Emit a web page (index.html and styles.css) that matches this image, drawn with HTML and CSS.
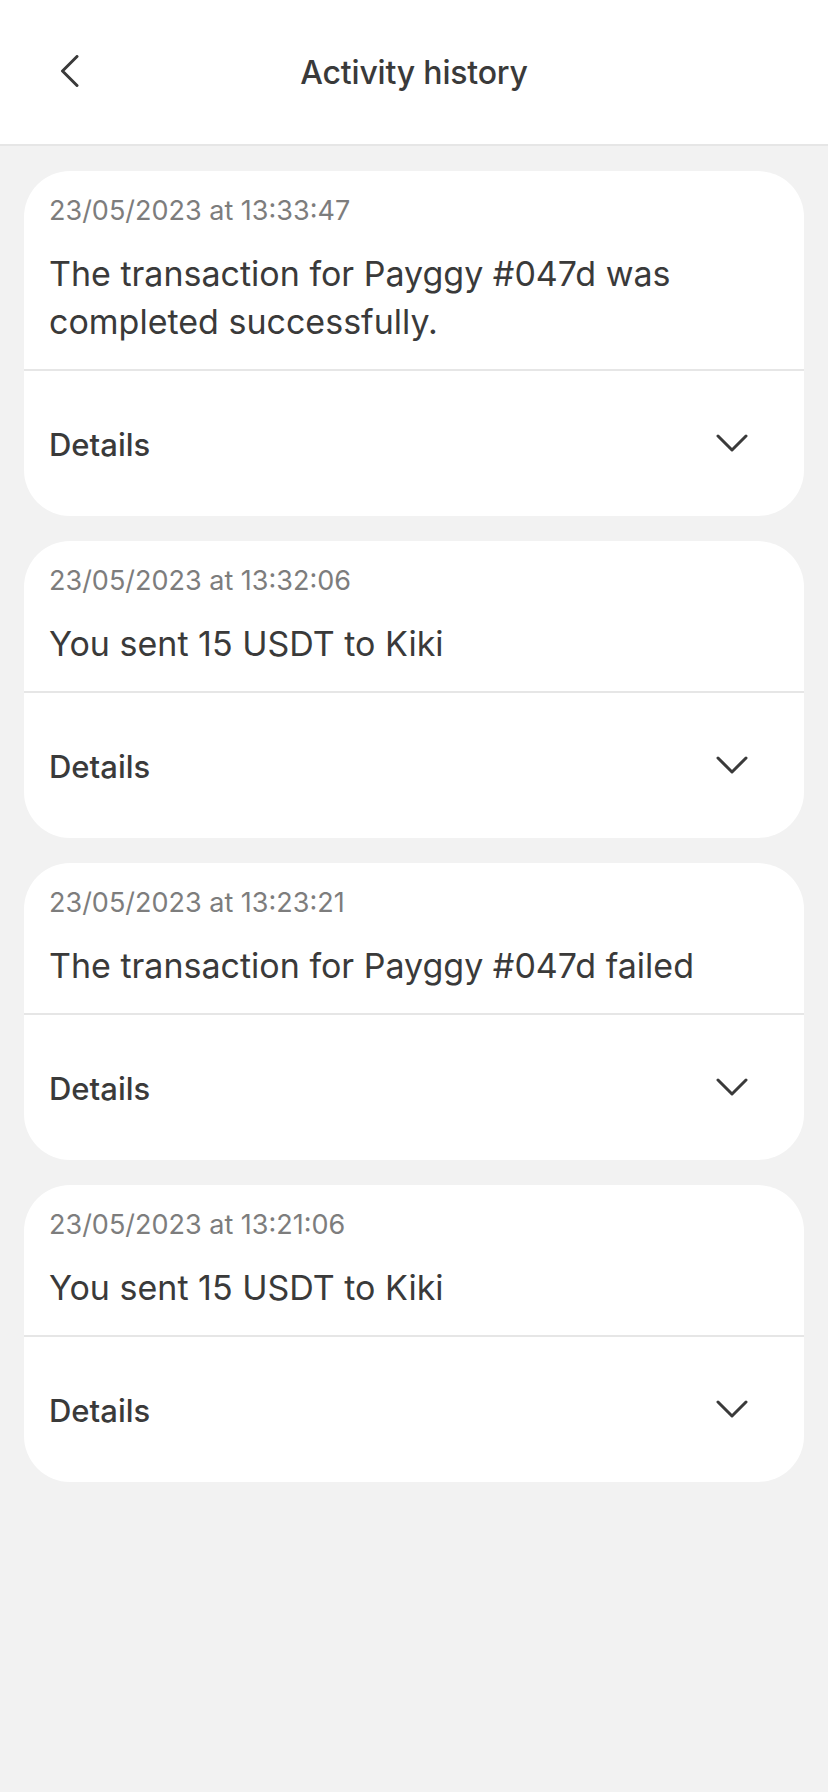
FILE: index.html
```html
<!DOCTYPE html>
<html lang="en">
<head>
<meta charset="utf-8">
<title>Activity history</title>
<link rel="stylesheet" href="styles.css">
</head>
<body>
<header class="topbar">
  <button class="back" aria-label="Back">
    <svg width="20" height="32" viewBox="0 0 20 32"><path d="M17 1.5 L2.5 16 L17 30.5" fill="none" stroke="#3a3a3a" stroke-width="3" stroke-linecap="round" stroke-linejoin="round"/></svg>
  </button>
  <h1 class="title">Activity history</h1>
</header>
<main class="list">
  <section class="card">
    <div class="card-main">
      <div class="date">23/05/2023 at 13:33:47</div>
      <p class="message">The transaction for Payggy #047d was completed successfully.</p>
    </div>
    <div class="card-foot">
      <span class="details">Details</span>
      <svg class="chev" width="32" height="18" viewBox="0 0 32 18"><path d="M2 2 L16 16 L30 2" fill="none" stroke="#3a3a3a" stroke-width="3" stroke-linecap="round" stroke-linejoin="round"/></svg>
    </div>
  </section>
  <section class="card">
    <div class="card-main">
      <div class="date">23/05/2023 at 13:32:06</div>
      <p class="message">You sent 15 USDT to Kiki</p>
    </div>
    <div class="card-foot">
      <span class="details">Details</span>
      <svg class="chev" width="32" height="18" viewBox="0 0 32 18"><path d="M2 2 L16 16 L30 2" fill="none" stroke="#3a3a3a" stroke-width="3" stroke-linecap="round" stroke-linejoin="round"/></svg>
    </div>
  </section>
  <section class="card">
    <div class="card-main">
      <div class="date">23/05/2023 at 13:23:21</div>
      <p class="message">The transaction for Payggy #047d failed</p>
    </div>
    <div class="card-foot">
      <span class="details">Details</span>
      <svg class="chev" width="32" height="18" viewBox="0 0 32 18"><path d="M2 2 L16 16 L30 2" fill="none" stroke="#3a3a3a" stroke-width="3" stroke-linecap="round" stroke-linejoin="round"/></svg>
    </div>
  </section>
  <section class="card">
    <div class="card-main">
      <div class="date">23/05/2023 at 13:21:06</div>
      <p class="message">You sent 15 USDT to Kiki</p>
    </div>
    <div class="card-foot">
      <span class="details">Details</span>
      <svg class="chev" width="32" height="18" viewBox="0 0 32 18"><path d="M2 2 L16 16 L30 2" fill="none" stroke="#3a3a3a" stroke-width="3" stroke-linecap="round" stroke-linejoin="round"/></svg>
    </div>
  </section>
</main>
</body>
</html>
```
FILE: styles.css
```css
* { box-sizing: border-box; }
html, body {
  margin: 0;
  padding: 0;
  background: #f2f2f2;
  font-family: Inter, "Noto Sans", "Liberation Sans", sans-serif;
  color: #3a3a3a;
  min-height: 1792px;
}
.topbar {
  height: 146px;
  background: #ffffff;
  border-bottom: 2px solid #e6e6e6;
  display: grid;
  grid-template-columns: 1fr auto 1fr;
  align-items: center;
  padding: 0 0 0 60px;
}
.back {
  justify-self: start;
  background: none;
  border: 0;
  padding: 0;
  margin-bottom: 3px;
  width: 22px;
  height: 32px;
  display: flex;
  align-items: center;
}
.title {
  margin: 0;
  font-size: 32px;
  font-weight: 500;
  letter-spacing: -0.2px;
  color: #3a3a3a;
  position: relative;
  left: -30px;
}
.list {
  display: flex;
  flex-direction: column;
  gap: 25px;
  padding: 25px 24px;
}
.card {
  background: #ffffff;
  border-radius: 46px;
  overflow: hidden;
}
.card-main {
  padding: 23px 25px 23px;
  border-bottom: 2px solid #e6e6e6;
}
.date {
  font-size: 27px;
  line-height: 34px;
  color: #7d7d7d;
}
.message {
  margin: 22px 0 0;
  font-size: 34px;
  line-height: 48px;
  color: #3a3a3a;
}
.card-foot {
  height: 145px;
  display: flex;
  align-items: center;
  justify-content: space-between;
  padding: 1px 56px 0 25px;
}
.details {
  font-size: 31px;
  font-weight: 500;
  color: #3a3a3a;
}
.chev { display: block; margin-top: -2px; }
```
